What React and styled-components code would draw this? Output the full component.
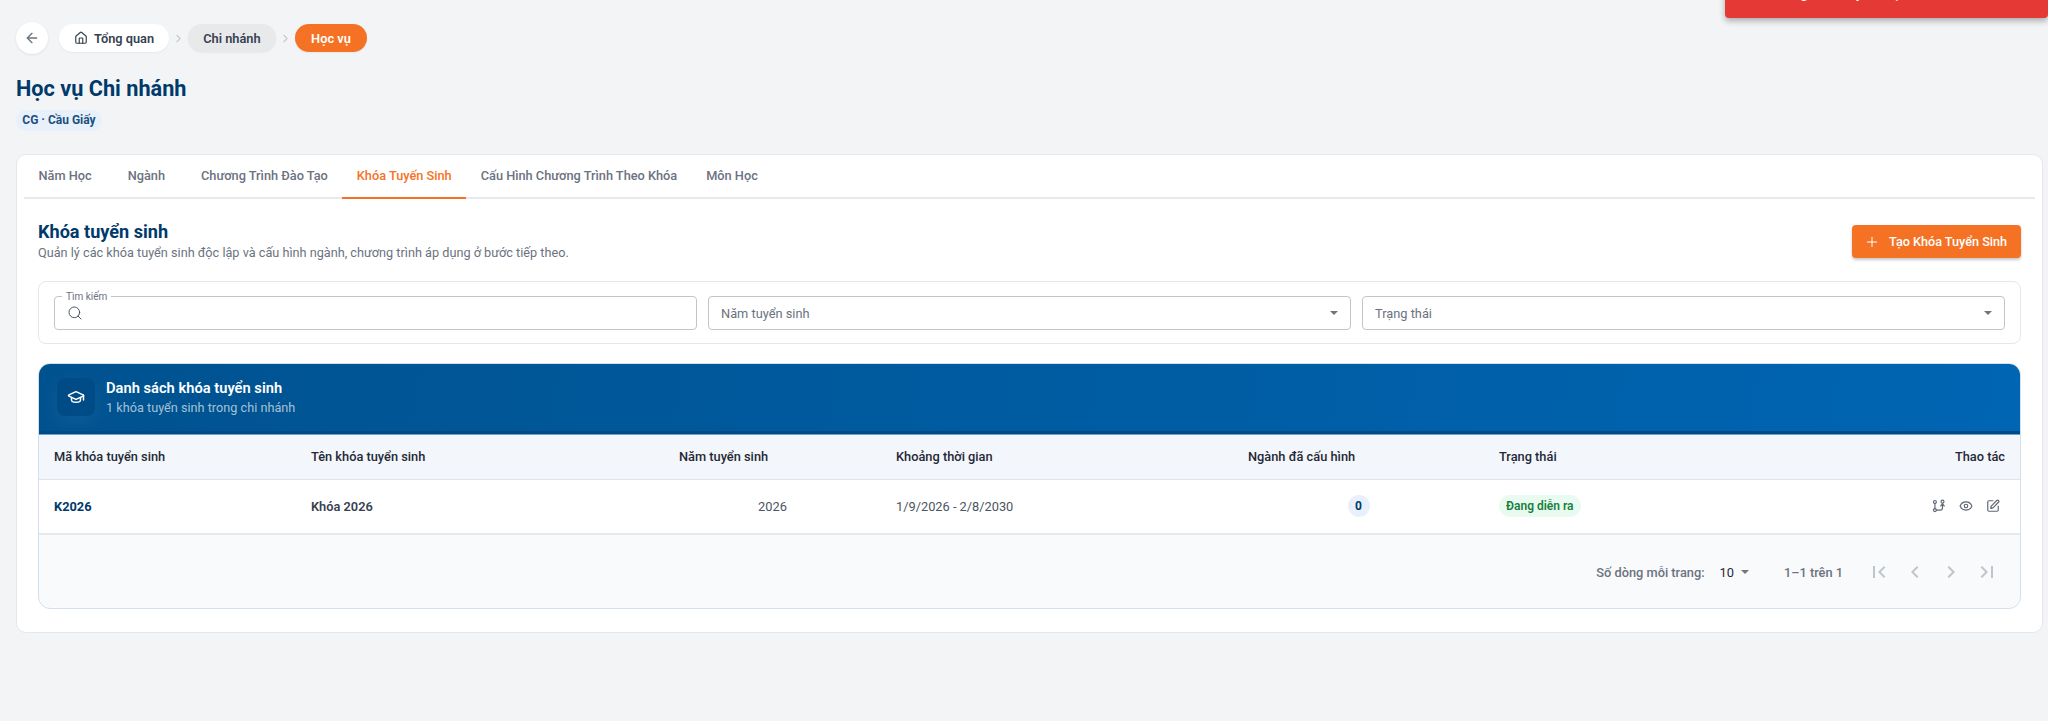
import React from 'react';
import styled, { createGlobalStyle } from 'styled-components';
import {
  ArrowLeft,
  ChevronRight,
  Eye,
  GraduationCap,
  House,
  Plus,
  Search,
  SquarePen,
} from 'lucide-react';

const GlobalStyle = createGlobalStyle`
  html, body {
    margin: 0;
    padding: 0;
    background: #f3f4f6;
    font-family: Roboto, "Noto Sans", sans-serif;
    color: #1f2937;
  }
  * { box-sizing: border-box; }
`;

const Page = styled.div`
  position: relative;
  width: 2048px;
  height: 721px;
  overflow: hidden;
  padding: 22px 5px 0 16px;
`;

const Toast = styled.div`
  position: absolute;
  top: -30px;
  right: 0;
  width: 323px;
  height: 48px;
  padding: 13px 0 0 43px;
  background: #e53935;
  border-radius: 4px;
  box-shadow: 0 3px 6px rgba(0, 0, 0, 0.3);
  color: #fff;
  font-size: 14px;
  line-height: 20px;
  font-weight: 500;
`;

const Breadcrumbs = styled.nav`
  display: flex;
  align-items: center;
  height: 32px;
`;

const BackButton = styled.div`
  width: 32px;
  height: 32px;
  margin-right: 11px;
  border-radius: 50%;
  background: #fff;
  box-shadow: 0 1px 3px rgba(0, 0, 0, 0.08);
  display: flex;
  align-items: center;
  justify-content: center;
  color: #6b7280;
`;

const Crumb = styled.div`
  height: 28px;
  padding: 0 ${(p) => (p.$active ? '16.5px' : '15px')};
  border-radius: 14px;
  display: flex;
  align-items: center;
  gap: 6px;
  font-size: 12.8px;
  font-weight: 600;
  background: ${(p) => (p.$active ? '#f57224' : p.$home ? '#fff' : '#e8e9eb')};
  color: ${(p) => (p.$active ? '#fff' : '#374151')};
  box-shadow: 0 1px 2px rgba(0, 0, 0, 0.05);
`;

const CrumbSep = styled.div`
  width: 19px;
  display: flex;
  justify-content: center;
  color: #c4c8ce;
`;

const Title = styled.h1`
  margin: 20px 0 0;
  font-size: 21.7px;
  line-height: 30px;
  font-weight: 700;
  color: #003a6b;
`;

const BranchTag = styled.div`
  width: 86px;
  margin-top: 6px;
  height: 21px;
  border-radius: 10px;
  background: #e8f1fb;
  color: #1b4f82;
  font-size: 12px;
  font-weight: 700;
  line-height: 21px;
  text-align: center;
  white-space: nowrap;
`;

const Card = styled.section`
  margin-top: 23px;
  height: 479px;
  background: #fff;
  border: 1px solid #e5e7eb;
  border-radius: 10px;
`;

const TabBar = styled.div`
  display: flex;
  height: 44px;
  margin: 0 7px;
  border-bottom: 2px solid #e8e9ef;
`;

const Tab = styled.div`
  height: 44px;
  padding: 0 14.5px 2px;
  margin-right: ${(p) => (p.$spaced ? '7px' : '0')};
  display: flex;
  align-items: center;
  font-size: 12.75px;
  font-weight: 500;
  color: ${(p) => (p.$active ? '#f57224' : '#6b7280')};
  border-bottom: 2px solid ${(p) => (p.$active ? '#f57224' : 'transparent')};
`;

const Body = styled.div`
  padding: 21px 21px 0;
`;

const SectionHead = styled.div`
  display: flex;
  justify-content: space-between;
  align-items: flex-start;
`;

const SectionTitle = styled.h2`
  margin: 0 0 1px;
  font-size: 18.1px;
  line-height: 23px;
  font-weight: 700;
  color: #003a6b;
`;

const SectionSub = styled.p`
  margin: 0;
  font-size: 12.7px;
  line-height: 18px;
  color: #6b7280;
`;

const CreateButton = styled.div`
  height: 33px;
  width: 169px;
  margin-top: 5px;
  padding-left: 12px;
  border-radius: 4px;
  background: #f57224;
  color: #fff;
  display: flex;
  align-items: center;
  gap: 9px;
  font-size: 12.65px;
  font-weight: 500;
  box-shadow: 0 2px 3px rgba(0, 0, 0, 0.22);
`;

const FilterBox = styled.div`
  margin-top: 19px;
  height: 63px;
  padding: 14px 15px 0;
  border: 1px solid #e5e7eb;
  border-radius: 8px;
  display: grid;
  grid-template-columns: repeat(3, 1fr);
  gap: 11px;
`;

const Field = styled.div`
  position: relative;
  height: 34px;
  padding: 0 12px;
  border: 1px solid #c4c4c4;
  border-radius: 4px;
  display: flex;
  align-items: center;
  justify-content: space-between;
  font-size: 12.8px;
  color: #6b7280;
`;

const SearchGlyph = styled(Search)`
  color: #4b5563;
`;

const FloatLabel = styled.span`
  position: absolute;
  top: -6px;
  left: 7px;
  padding: 0 4px;
  background: #fff;
  font-size: 10px;
  line-height: 11px;
  color: #6b7280;
`;

const Caret = styled.span`
  width: 0;
  height: 0;
  border-left: 4.5px solid transparent;
  border-right: 4.5px solid transparent;
  border-top: 4.5px solid #757575;
`;

const TableCard = styled.div`
  margin-top: 19px;
  height: 246px;
  border: 1px solid #d3e0ec;
  border-radius: 12px;
  overflow: hidden;
  background: #f9fafb;
`;

const TableHeader = styled.div`
  height: 71px;
  padding: 14px 19px 0 18px;
  display: flex;
  gap: 11px;
  background: linear-gradient(100deg, #00528f 0%, #0065b3 100%);
  border-bottom: 1px solid #6f9fc7;
  box-shadow: inset 0 -3px 0 #004a85;
`;

const HeaderIcon = styled.div`
  width: 38px;
  height: 38px;
  border-radius: 8px;
  background: rgba(0, 40, 90, 0.15);
  box-shadow: 0 6px 18px rgba(255, 255, 255, 0.06);
  color: #fff;
  display: flex;
  align-items: center;
  justify-content: center;
`;

const HeaderTitle = styled.div`
  font-size: 14.7px;
  font-weight: 600;
  line-height: 20px;
  color: #fff;
`;

const HeaderSub = styled.div`
  margin-top: 1px;
  font-size: 12.7px;
  line-height: 18px;
  color: rgba(255, 255, 255, 0.65);
`;

const Table = styled.table`
  width: 100%;
  border-collapse: collapse;
  table-layout: fixed;
`;

const Th = styled.th`
  height: 44px;
  padding: 0 15px;
  background: #f3f6fa;
  border-bottom: 1px solid #dfe5ec;
  font-size: 12.8px;
  font-weight: 500;
  color: #1f2937;
  text-align: ${(p) => p.$align || 'left'};
`;

const Td = styled.td`
  height: 55px;
  padding: 0 15px;
  background: #fff;
  border-bottom: 2px solid #e8e9ef;
  font-size: 12.8px;
  color: ${(p) => p.$color || '#4b5563'};
  font-weight: ${(p) => p.$weight || 400};
  text-align: ${(p) => p.$align || 'left'};
`;

const CountBadge = styled.span`
  display: inline-block;
  min-width: 22px;
  height: 22px;
  border-radius: 11px;
  background: #e8f1fb;
  color: #003a6b;
  font-size: 12px;
  font-weight: 700;
  line-height: 22px;
  text-align: center;
`;

const StatusBadge = styled.span`
  display: inline-block;
  height: 22px;
  padding: 0 7px;
  border-radius: 11px;
  background: #e9fbf0;
  color: #15803d;
  font-size: 12px;
  font-weight: 600;
  line-height: 22px;
`;

const Actions = styled.div`
  display: flex;
  justify-content: flex-end;
  gap: 13px;
  color: #5f6772;
  padding-right: 5px;
`;

const Pager = styled.div`
  height: 74px;
  padding-right: 21px;
  display: flex;
  align-items: center;
  justify-content: flex-end;
  font-size: 12.8px;
  color: #6b7280;
  font-weight: 500;
`;

const RowsValue = styled.div`
  display: flex;
  align-items: center;
  gap: 7px;
  margin: 0 35px 0 15px;
  color: #1f2937;
  font-weight: 400;
`;

const PagerRange = styled.div`
  margin-right: 24px;
`;

const PagerIcons = styled.div`
  display: flex;
  gap: 12px;
  color: #c0c4cb;
`;

const PagerIcon = ({ d }) => (
  <svg width="24" height="24" viewBox="0 0 24 24" fill="currentColor"><path d={d} /></svg>
);

const BranchIcon = () => (
  <svg width="14" height="14" viewBox="0 0 24 24" fill="none" stroke="currentColor" strokeWidth="2" strokeLinecap="round" strokeLinejoin="round">
    <circle cx="5" cy="5" r="2.5" />
    <circle cx="5" cy="19" r="2.5" />
    <path d="M5 7.5v9" />
    <circle cx="18" cy="4.5" r="2.5" />
    <path d="M7.5 19H14a4 4 0 0 0 4-4V9" />
    <path d="M15 12l3-3.5 3 3.5" />
  </svg>
);

const TABS = ['Năm Học', 'Ngành', 'Chương Trình Đào Tạo', 'Khóa Tuyến Sinh', 'Cấu Hình Chương Trình Theo Khóa', 'Môn Học'];

const PAGER_PATHS = [
  'M18.41 16.59 13.82 12l4.59-4.59L17 6l-6 6 6 6zM6 6h2v12H6z',
  'M15.41 16.59 10.83 12l4.58-4.59L14 6l-6 6 6 6z',
  'M8.59 16.59 13.17 12 8.59 7.41 10 6l6 6-6 6z',
  'M5.59 7.41 10.18 12l-4.59 4.59L7 18l6-6-6-6zM16 6h2v12h-2z',
];

export default function App() {
  return (
    <Page>
      <GlobalStyle />
      <Toast>Không tìm thấy dữ liệu</Toast>
      <Breadcrumbs>
        <BackButton><ArrowLeft size={16} /></BackButton>
        <Crumb $home><House size={14} />Tổng quan</Crumb>
        <CrumbSep><ChevronRight size={13} /></CrumbSep>
        <Crumb>Chi nhánh</Crumb>
        <CrumbSep><ChevronRight size={13} /></CrumbSep>
        <Crumb $active>Học vụ</Crumb>
      </Breadcrumbs>
      <Title>Học vụ Chi nhánh</Title>
      <BranchTag>CG · Cầu Giấy</BranchTag>
      <Card>
        <TabBar>
          {TABS.map((t, i) => (
            <Tab key={t} $active={i === 3} $spaced={i < 2}>{t}</Tab>
          ))}
        </TabBar>
        <Body>
          <SectionHead>
            <div>
              <SectionTitle>Khóa tuyển sinh</SectionTitle>
              <SectionSub>Quản lý các khóa tuyển sinh độc lập và cấu hình ngành, chương trình áp dụng ở bước tiếp theo.</SectionSub>
            </div>
            <CreateButton><Plus size={16} strokeWidth={1.5} />Tạo Khóa Tuyển Sinh</CreateButton>
          </SectionHead>
          <FilterBox>
            <Field>
              <FloatLabel>Tìm kiếm</FloatLabel>
              <SearchGlyph size={16} strokeWidth={1.5} />
            </Field>
            <Field>Năm tuyển sinh<Caret /></Field>
            <Field>Trạng thái<Caret /></Field>
          </FilterBox>
          <TableCard>
            <TableHeader>
              <HeaderIcon><GraduationCap size={18} /></HeaderIcon>
              <div>
                <HeaderTitle>Danh sách khóa tuyển sinh</HeaderTitle>
                <HeaderSub>1 khóa tuyển sinh trong chi nhánh</HeaderSub>
              </div>
            </TableHeader>
            <Table>
              <colgroup>
                <col style={{ width: 257 }} />
                <col style={{ width: 368 }} />
                <col style={{ width: 217 }} />
                <col style={{ width: 352 }} />
                <col style={{ width: 251 }} />
                <col style={{ width: 220 }} />
                <col />
              </colgroup>
              <thead>
                <tr>
                  <Th>Mã khóa tuyển sinh</Th>
                  <Th>Tên khóa tuyển sinh</Th>
                  <Th>Năm tuyển sinh</Th>
                  <Th>Khoảng thời gian</Th>
                  <Th>Ngành đã cấu hình</Th>
                  <Th>Trạng thái</Th>
                  <Th $align="right">Thao tác</Th>
                </tr>
              </thead>
              <tbody>
                <tr>
                  <Td $color="#003a6b" $weight={700}>K2026</Td>
                  <Td $color="#374151" $weight={600}>Khóa 2026</Td>
                  <Td $align="center">2026</Td>
                  <Td>1/9/2026 - 2/8/2030</Td>
                  <Td $align="center"><CountBadge>0</CountBadge></Td>
                  <Td><StatusBadge>Đang diễn ra</StatusBadge></Td>
                  <Td>
                    <Actions>
                      <BranchIcon />
                      <Eye size={14} />
                      <SquarePen size={14} />
                    </Actions>
                  </Td>
                </tr>
              </tbody>
            </Table>
            <Pager>
              Số dòng mỗi trang:
              <RowsValue>10<Caret /></RowsValue>
              <PagerRange>1–1 trên 1</PagerRange>
              <PagerIcons>
                {PAGER_PATHS.map((d) => <PagerIcon key={d} d={d} />)}
              </PagerIcons>
            </Pager>
          </TableCard>
        </Body>
      </Card>
    </Page>
  );
}
